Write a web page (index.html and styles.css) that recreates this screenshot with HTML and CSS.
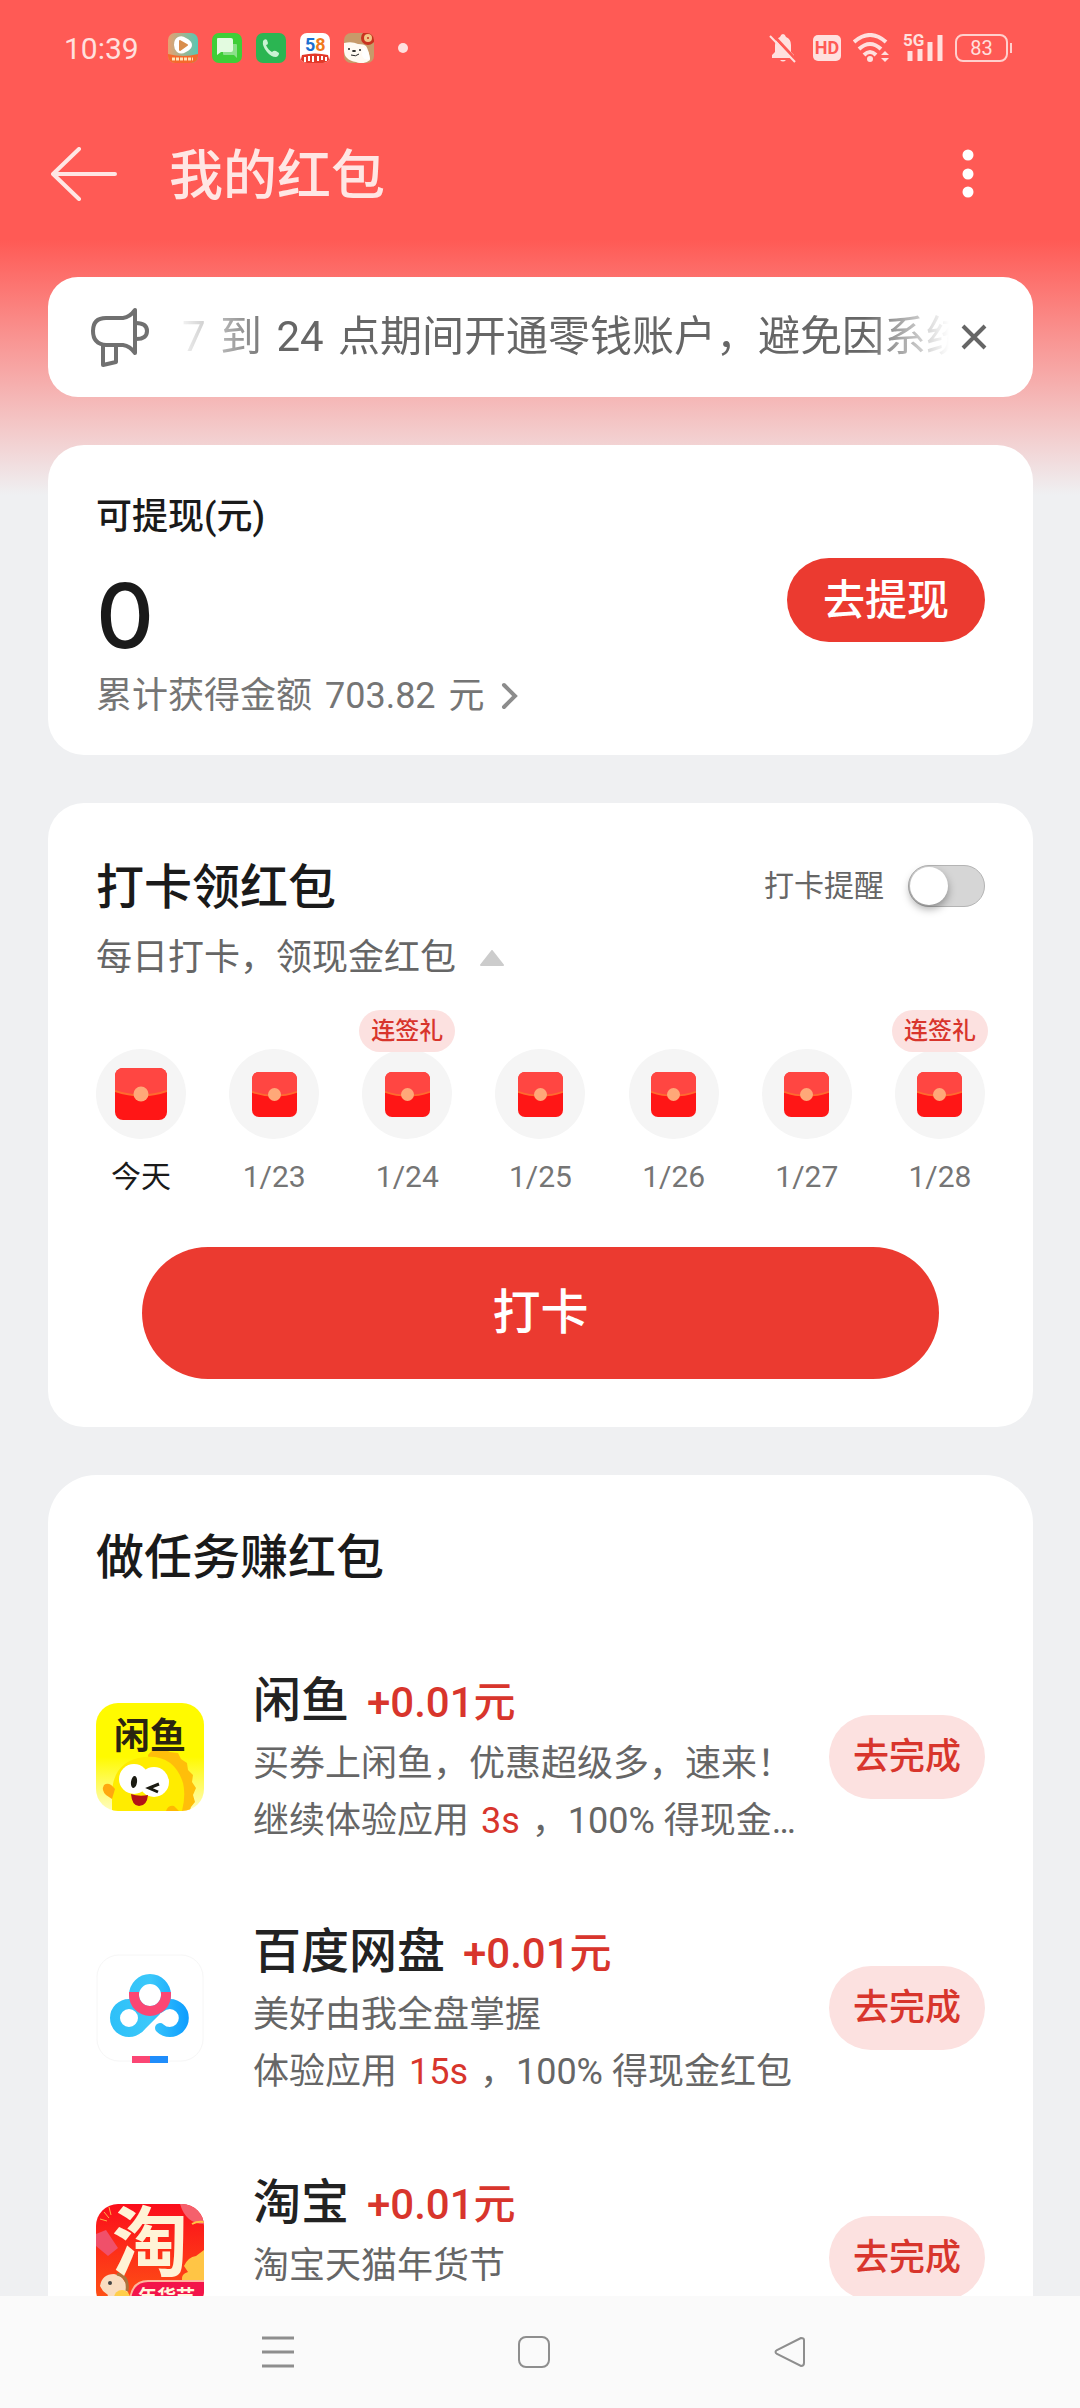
FILE: index.html
```html
<!DOCTYPE html>
<html lang="zh-CN">

<head>
    <meta charset="UTF-8">
    <meta name="viewport" content="width=device-width, initial-scale=1.0">
    <title>我的红包</title>
    <link rel="stylesheet" href="styles.css">
</head>

<body>

    <!-- envelope shared by the seven days -->
    <svg class="defs" width="0" height="0" aria-hidden="true">
        <defs>
            <symbol id="envelope" viewBox="0 0 52 52">
                <rect width="52" height="52" rx="8" fill="#ff1616" />
                <path d="M0 23V8a8 8 0 0 1 8-8h36a8 8 0 0 1 8 8v15Q26 32 0 23z" fill="#ff4642" />
                <path d="M0 23Q26 32 52 23" fill="none" stroke="#ff6a2e" stroke-width="2" />
                <circle cx="26" cy="26" r="7.5" fill="#ffa878" />
            </symbol>
        </defs>
    </svg>

    <div class="status-bar">
        <div class="status-left">
            <span class="time">10:39</span>
            <div class="app-icons">
                <svg width="30" height="30" viewBox="0 0 30 30">
                    <defs>
                        <linearGradient id="video" x1="0" y1="0" x2="1" y2="0">
                            <stop offset="0" stop-color="#e8a070" />
                            <stop offset="1" stop-color="#56c8b4" />
                        </linearGradient>
                        <clipPath id="round"><rect width="30" height="30" rx="7" /></clipPath>
                    </defs>
                    <g clip-path="url(#round)">
                        <rect width="30" height="30" fill="url(#video)" />
                        <path d="M0 21q15 4 30 0v9H0z" fill="#f4692c" />
                        <path d="M10 4q4-2 8 1 6 3 6 7t-6 7q-5 3-9 0-3-3-3-7 0-6 4-8z" fill="#fff" />
                        <path d="M12 8l7 4-7 5z" fill="#d98d4d" stroke="#d98d4d" stroke-width="2" stroke-linejoin="round" />
                        <path d="M4 26h21" stroke="#ffe3b8" stroke-width="3" stroke-dasharray="3 1" />
                    </g>
                </svg>
                <svg width="30" height="30" viewBox="0 0 30 30">
                    <rect width="30" height="30" rx="7" fill="#3fce38" />
                    <path d="M11 11h13q1 0 1 1v13l-3-3H12q-1 0-1-1z" fill="#8be08a" />
                    <path d="M6 5h13q2 0 2 2v10q0 2-2 2H9l-4 3V6q0-1 1-1z" fill="#e3fbe0" />
                </svg>
                <svg width="30" height="30" viewBox="0 0 30 30">
                    <rect width="30" height="30" rx="7" fill="#2bb552" />
                    <path d="M7 8q2-3 4-1l1 3q0 2-2 2 2 5 6 7 2-2 4-1l3 2q0 3-3 4-5 0-9-5-5-6-4-11z" fill="#c8f3d3" />
                </svg>
                <svg width="30" height="30" viewBox="0 0 30 30">
                    <g clip-path="url(#round)">
                        <rect width="30" height="30" fill="#fff" />
                        <text class="logo-58" x="5" y="18"><tspan fill="#1b6fd0">5</tspan><tspan fill="#f07a1c">8</tspan></text>
                        <path d="M2 22q13-3 26 0l2 8H0z" fill="#e23a2a" />
                        <path d="M5 24v5M9 23v5M13 23v6M18 23v5M22 23v4M26 24v4" stroke="#fff" stroke-width="2" />
                    </g>
                </svg>
                <svg width="30" height="30" viewBox="0 0 30 30">
                    <g clip-path="url(#round)">
                        <rect width="30" height="30" fill="#c79a6a" />
                        <path d="M0 10q8-2 14 1 6 0 8 2 3 4 4 14-6 5-14 2Q0 27 0 17z" fill="#fffaf3" />
                        <path d="M19 14q6 3 7 12-6 2-8-4z" fill="#fff" />
                        <circle cx="24" cy="5" r="7" fill="#c9321f" />
                        <circle cx="24" cy="5" r="4" fill="#f2c486" />
                        <circle cx="24" cy="5" r="1" fill="#c9321f" />
                        <circle cx="5" cy="16" r="1" fill="#222" />
                        <ellipse cx="10" cy="18" rx="2" ry="1" fill="#222" />
                        <circle cx="16" cy="17" r="1" fill="#222" />
                        <path d="M7 22q5 2 8-1" fill="none" stroke="#222" stroke-width="1" />
                    </g>
                </svg>
            </div>
            <span class="more-dot"></span>
        </div>
        <div class="status-right">
            <svg class="bell" width="28" height="30" viewBox="0 0 28 30">
                <path d="M3 25v-3l3-3v-7q0-6 5-8 1-3 3-3t3 3q5 2 5 8v7l3 3v3z" fill="#ffe0de" />
                <path d="M11 27h6q-3 3-6 0z" fill="#ffe0de" />
                <path d="M4 2l24 26" stroke="#ff5a55" stroke-width="3" />
                <path d="M1 3l25 26" stroke="#ffe0de" stroke-width="2" />
            </svg>
            <span class="hd">HD</span>
            <svg width="38" height="30" viewBox="0 0 38 30">
                <g fill="none" stroke="#ffe0de" stroke-width="4">
                    <path d="M1 9q16-14 32 0" />
                    <path d="M6 16q11-10 22 0" />
                    <path d="M11 22q6-6 12 0" />
                </g>
                <circle cx="17" cy="26" r="3" fill="#ffe0de" />
                <path d="M28 22l4-4 4 4zM28 25l4 4 4-4z" fill="#ffe0de" />
            </svg>
            <svg width="40" height="30" viewBox="0 0 40 30">
                <text class="net" x="0" y="13">5G</text>
                <path d="M7 18v10M17 16v12M27 9v19M37 2v26" stroke="#ffe0de" stroke-width="5" />
            </svg>
            <span class="battery">83</span>
        </div>
    </div>

    <header class="title-bar">
        <button class="icon-btn" aria-label="返回">
            <svg width="66" height="54" viewBox="0 0 66 54">
                <path d="M28 2L2 27l26 25M2 27h62" fill="none" stroke="#ffe6e4" stroke-width="4" stroke-linecap="round" stroke-linejoin="round" />
            </svg>
        </button>
        <h1>我的红包</h1>
        <button class="icon-btn" aria-label="更多">
            <svg width="12" height="50" viewBox="0 0 12 50" fill="#fff">
                <circle cx="6" cy="6" r="5.5" />
                <circle cx="6" cy="25" r="5.5" />
                <circle cx="6" cy="43" r="5.5" />
            </svg>
        </button>
    </header>

    <main class="content">

        <section class="card notice">
            <svg width="60" height="62" viewBox="0 0 60 62" fill="none" stroke="#707070" stroke-width="4" stroke-linejoin="round">
                <path d="M45 4v43q-5-7-12-8H16Q3 38 3 25t13-13h17q7-1 12-8z" />
                <path d="M46 17q11 0 11 8t-11 8" />
                <path d="M13 39v20l13-3V39" />
            </svg>
            <div class="notice-text"><span class="num">7</span> 到 <span class="num">24</span> 点期间开通零钱账户，避免因系统原因</div>
            <button class="icon-btn" aria-label="关闭">
                <svg width="26" height="26" viewBox="0 0 26 26">
                    <path d="M2 2l22 22M24 2L2 24" stroke="#666" stroke-width="4" />
                </svg>
            </button>
        </section>

        <section class="card balance">
            <div class="balance-info">
                <div class="balance-label">可提现(元)</div>
                <div class="amount">0</div>
                <a class="total" href="#">
                    <span>累计获得金额 <span class="num">703.82</span> 元</span>
                    <svg width="18" height="28" viewBox="0 0 18 28">
                        <path d="M3 3l11 11L3 25" fill="none" stroke="#8c8c8c" stroke-width="4" stroke-linecap="round" />
                    </svg>
                </a>
            </div>
            <button class="btn-withdraw">去提现</button>
        </section>

        <section class="card checkin">
            <div class="checkin-head">
                <h2>打卡领红包</h2>
                <label class="remind">打卡提醒
                    <input type="checkbox" class="switch">
                </label>
            </div>
            <p class="checkin-sub">每日打卡，领现金红包
                <svg width="24" height="16" viewBox="0 0 24 16">
                    <path d="M12 1L23 15H1z" fill="#ccc" stroke="#ccc" stroke-width="2" stroke-linejoin="round" />
                </svg>
            </p>
            <div class="days">
                <div class="day today">
                    <div class="circle"><svg class="envelope"><use href="#envelope" /></svg></div>
                    <span>今天</span>
                </div>
                <div class="day">
                    <div class="circle"><svg class="envelope"><use href="#envelope" /></svg></div>
                    <span>1/23</span>
                </div>
                <div class="day">
                    <em class="gift">连签礼</em>
                    <div class="circle"><svg class="envelope"><use href="#envelope" /></svg></div>
                    <span>1/24</span>
                </div>
                <div class="day">
                    <div class="circle"><svg class="envelope"><use href="#envelope" /></svg></div>
                    <span>1/25</span>
                </div>
                <div class="day">
                    <div class="circle"><svg class="envelope"><use href="#envelope" /></svg></div>
                    <span>1/26</span>
                </div>
                <div class="day">
                    <div class="circle"><svg class="envelope"><use href="#envelope" /></svg></div>
                    <span>1/27</span>
                </div>
                <div class="day">
                    <em class="gift">连签礼</em>
                    <div class="circle"><svg class="envelope"><use href="#envelope" /></svg></div>
                    <span>1/28</span>
                </div>
            </div>
            <button class="btn-checkin">打卡</button>
        </section>

        <section class="card tasks">
            <h2>做任务赚红包</h2>

            <div class="task">
                <svg class="task-icon" viewBox="0 0 108 108">
                    <defs>
                        <linearGradient id="fish" x1="0" y1="0" x2="0" y2="1">
                            <stop offset=".5" stop-color="#fffa00" />
                            <stop offset="1" stop-color="#fffcc0" />
                        </linearGradient>
                        <clipPath id="tile"><rect width="108" height="108" rx="22" /></clipPath>
                    </defs>
                    <g clip-path="url(#tile)">
                        <rect width="108" height="108" fill="url(#fish)" />
                        <path d="M52 52q6-8 16-6l6 3 8 1 3 6 6 4 1 7 5 5-1 7 4 6-3 7 2 7-4 5-2 6H60z" fill="#ffbe0a" />
                        <path d="M16 108V92q0-34 32-38 30-3 39 26 3 12-1 28z" fill="#ffec00" />
                        <path d="M19 86q-6-8-11-4-3 5 2 10l6 4z" fill="#ffa80f" />
                        <path d="M70 108q2-6 8-5l5 5z" fill="#ffb900" />
                        <circle cx="38" cy="76" r="15" fill="#fff" />
                        <circle cx="58" cy="79" r="15" fill="#fff" />
                        <ellipse cx="38" cy="79" rx="3" ry="6" fill="#1b1b12" transform="rotate(8 38 79)" />
                        <path d="M63 81l-10 4 9 4" fill="none" stroke="#1b1b12" stroke-width="3" />
                        <path d="M35 91q8 3 17 1-1 11-9 11-7 0-8-12z" fill="#b31217" />
                        <text class="logo-fish" x="18" y="46">闲鱼</text>
                    </g>
                </svg>
                <div class="task-info">
                    <h3>闲鱼<span class="reward">+0.01元</span></h3>
                    <p>买券上闲鱼，优惠超级多，速来！</p>
                    <p>继续体验应用 <b>3s</b> ，100% 得现金红包</p>
                </div>
                <button class="btn-task">去完成</button>
            </div>

            <div class="task">
                <svg class="task-icon" viewBox="0 0 108 108">
                    <defs>
                        <linearGradient id="pan" gradientUnits="userSpaceOnUse" x1="14" y1="0" x2="94" y2="0">
                            <stop offset="0" stop-color="#2ec0f8" />
                            <stop offset=".5" stop-color="#3bc8fa" />
                            <stop offset="1" stop-color="#0c9bff" />
                        </linearGradient>
                    </defs>
                    <rect x="1" y="1" width="106" height="106" rx="22" fill="#fff" stroke="#f6f6f6" />
                    <g fill="none" stroke="url(#pan)" stroke-width="10" stroke-linecap="round">
                        <circle cx="33" cy="64" r="14" />
                        <path d="M43 74l17-17" />
                        <path d="M64 54a14 14 0 1 1 0 20" />
                        <circle cx="54" cy="41" r="16" />
                    </g>
                    <path d="M38 38v3a16 16 0 0 0 32 0v-3" fill="none" stroke="#fb4674" stroke-width="10" />
                    <path d="M36 102h18v7H36z" fill="#fb4674" />
                    <path d="M54 102h18v7H54z" fill="#1f8dfb" />
                </svg>
                <div class="task-info">
                    <h3>百度网盘<span class="reward">+0.01元</span></h3>
                    <p>美好由我全盘掌握</p>
                    <p>体验应用 <b>15s</b> ，100% 得现金红包</p>
                </div>
                <button class="btn-task">去完成</button>
            </div>

            <div class="task">
                <svg class="task-icon" viewBox="0 0 108 108">
                    <defs>
                        <linearGradient id="tao" x1="0" y1="0" x2="0" y2="1">
                            <stop offset="0" stop-color="#fb0d1b" />
                            <stop offset="1" stop-color="#ff5a14" />
                        </linearGradient>
                    </defs>
                    <g clip-path="url(#tile)">
                        <rect width="108" height="108" fill="url(#tao)" />
                        <path d="M84 0h24v20q-18 0-24-20z" fill="#f5606c" />
                        <path d="M0 30l10-4 12 18-10 8L0 42z" fill="#f0506a" />
                        <path d="M8 8l5 6M13 3l2 8M4 15l7 2" stroke="#ffb347" stroke-width="1" />
                        <path d="M88 62q4-9 12-10l8-6v30H86q-1-6 6-8z" fill="#ffc545" />
                        <path d="M96 20q5-3 12-2" stroke="#ffc545" stroke-width="2" fill="none" />
                        <path d="M4 82q2-12 14-12 12 2 13 16l6 22H4l8-17-5-4z" fill="#f9dcc0" />
                        <path d="M21 70q12 2 10 17" fill="none" stroke="#a9743d" stroke-width="3" />
                        <circle cx="14" cy="79" r="2" fill="#444" />
                        <circle cx="26" cy="94" r="8" fill="#ffce4a" />
                        <text class="logo-tao" x="16" y="66">淘</text>
                        <path d="M34 108V96q2-19 18-19h58v31z" fill="#f3144a" stroke="#ffb59c" stroke-width="2" />
                        <text class="logo-fest" x="42" y="100">年货节</text>
                    </g>
                </svg>
                <div class="task-info">
                    <h3>淘宝<span class="reward">+0.01元</span></h3>
                    <p>淘宝天猫年货节</p>
                </div>
                <button class="btn-task">去完成</button>
            </div>
        </section>

    </main>

    <nav class="nav-bar">
        <button class="icon-btn" aria-label="最近任务">
            <svg width="32" height="32" viewBox="0 0 32 32">
                <path d="M0 2h32M0 16h32M0 30h32" stroke="#8e8e8e" stroke-width="3" />
            </svg>
        </button>
        <button class="icon-btn" aria-label="主屏幕">
            <svg width="32" height="32" viewBox="0 0 32 32">
                <rect x="1" y="1" width="30" height="30" rx="7" fill="none" stroke="#8e8e8e" stroke-width="2" />
            </svg>
        </button>
        <button class="icon-btn" aria-label="返回">
            <svg width="32" height="32" viewBox="0 0 32 32">
                <path d="M27 2L3 14q-3 2 0 4l24 12q3 0 3-3V4q0-2-3-2z" fill="none" stroke="#8e8e8e" stroke-width="2" />
            </svg>
        </button>
    </nav>

</body>

</html>
```
FILE: styles.css
```css
* {
    margin: 0;
    padding: 0;
    box-sizing: border-box;
    font-family: Roboto, "Noto Sans CJK SC", sans-serif;
}

body {
    height: 100vh;
    display: flex;
    flex-direction: column;
    background: #eff0f2 linear-gradient(#ff5a55 240px, #eff0f2 495px);
    color: #1a1a1a;
    overflow: hidden;
}

svg {
    display: block;
    flex-shrink: 0;
}

.defs {
    position: absolute;
}

button {
    border: none;
    cursor: pointer;
    line-height: 1;
}

.icon-btn {
    background: none;
    display: flex;
}

h1,
h2,
h3 {
    font-weight: 500;
}

.num {
    margin: 0 4px;
}

/* status bar */
.status-bar {
    height: 96px;
    flex-shrink: 0;
    padding: 0 68px 0 64px;
    display: flex;
    align-items: center;
    justify-content: space-between;
    color: #ffe0de;
}

.status-left,
.status-right,
.app-icons {
    display: flex;
    align-items: center;
}

.time {
    font-size: 30px;
    width: 104px;
}

.app-icons {
    gap: 14px;
}

.more-dot {
    width: 10px;
    height: 10px;
    margin-left: 24px;
    border-radius: 50%;
    background: #ffe0de;
}

.status-right {
    gap: 12px;
}

.bell {
    margin-right: 4px;
}

.hd {
    width: 28px;
    height: 26px;
    border-radius: 5px;
    background: #ffe0de;
    color: #ff5a55;
    font-size: 18px;
    font-weight: 700;
    line-height: 26px;
    text-align: center;
}

.net {
    font-size: 17px;
    font-weight: 700;
    fill: #ffe0de;
}

.battery {
    position: relative;
    width: 53px;
    height: 28px;
    margin-right: 4px;
    border: 2px solid #ffd0cd;
    border-radius: 8px;
    font-size: 20px;
    line-height: 24px;
    text-align: center;
}

.battery::after {
    content: "";
    position: absolute;
    right: -6px;
    top: 7px;
    width: 2px;
    height: 10px;
    background: #ffd0cd;
}

/* title */
.title-bar {
    height: 156px;
    flex-shrink: 0;
    padding: 0 106px 0 51px;
    display: flex;
    align-items: center;
    color: #ffe6e4;
}

.title-bar h1 {
    flex: 1;
    margin-left: 52px;
    padding-top: 6px;
    font-size: 54px;
    line-height: 72px;
}

/* cards */
.content {
    flex: 1;
    min-height: 0;
    padding: 25px 47px 0 48px;
    overflow: hidden;
}

.card {
    margin-bottom: 48px;
    padding: 0 48px;
    border-radius: 36px;
    background: #fff;
}

.card h2 {
    padding-top: 4px;
    font-size: 48px;
    line-height: 66px;
}

.notice {
    height: 120px;
    padding: 0 46px 0 42px;
    border-radius: 30px;
    display: flex;
    align-items: center;
}

.notice-text {
    flex: 1;
    min-width: 0;
    margin: 0 12px 0 24px;
    padding-left: 4px;
    overflow: hidden;
    white-space: nowrap;
    font-size: 42px;
    line-height: 60px;
    color: #666;
    -webkit-mask-image: linear-gradient(90deg, transparent, #000 100px, #000 calc(100% - 84px), transparent);
    mask-image: linear-gradient(90deg, transparent, #000 100px, #000 calc(100% - 84px), transparent);
}

.balance {
    display: flex;
    align-items: center;
    justify-content: space-between;
}

.balance-info {
    padding: 44px 0 38px;
}

.balance-label {
    font-size: 36px;
    font-weight: 500;
    line-height: 56px;
}

.amount {
    margin-top: 12px;
    font-family: Inter, sans-serif;
    font-size: 90px;
    font-weight: 500;
    line-height: 118px;
}

.total {
    display: flex;
    align-items: center;
    gap: 16px;
    font-size: 36px;
    line-height: 42px;
    color: #757575;
    text-decoration: none;
}

.btn-withdraw {
    height: 84px;
    padding: 2px 36px 0;
    border-radius: 42px;
    background: #eb3a30;
    color: #fff;
    font-size: 42px;
    font-weight: 500;
}

/* check in */
.checkin {
    padding-top: 48px;
    padding-bottom: 48px;
}

.checkin-head {
    display: flex;
    align-items: center;
    justify-content: space-between;
}

.remind {
    display: flex;
    align-items: center;
    gap: 24px;
    font-size: 30px;
    line-height: 42px;
    color: #666;
}

.switch {
    appearance: none;
    width: 77px;
    height: 42px;
    padding: 1px;
    border: 1px solid #b4b4b4;
    border-radius: 21px;
    background: #d6d6d6;
}

.switch::before {
    content: "";
    display: block;
    width: 38px;
    height: 38px;
    border-radius: 50%;
    background: #fff;
    box-shadow: 0 4px 8px rgba(0, 0, 0, .35);
}

.switch:checked {
    background: #eb3a30;
}

.switch:checked::before {
    margin-left: 35px;
}

.checkin-sub {
    display: flex;
    align-items: center;
    gap: 24px;
    padding-top: 2px;
    font-size: 36px;
    line-height: 70px;
    color: #666;
}

.days {
    margin-top: 56px;
    display: flex;
    justify-content: space-between;
}

.day {
    position: relative;
    width: 90px;
    text-align: center;
    font-size: 30px;
    line-height: 40px;
    color: #757575;
}

.circle {
    height: 90px;
    margin-bottom: 18px;
    border-radius: 50%;
    background: #f5f5f5;
    display: flex;
    align-items: center;
    justify-content: center;
}

.envelope {
    width: 45px;
    height: 45px;
}

.today {
    color: #1a1a1a;
}

.today .envelope {
    width: 52px;
    height: 52px;
}

/* badge sits on top of the circle */
.gift {
    position: absolute;
    top: -39px;
    left: -3px;
    width: 96px;
    border-radius: 21px;
    background: #fce1e0;
    color: #d8352c;
    font-size: 24px;
    font-style: normal;
    font-weight: 500;
    line-height: 42px;
}

.btn-checkin {
    display: block;
    width: calc(100% - 92px);
    height: 132px;
    margin: 50px auto 0;
    border-radius: 66px;
    background: #eb3a30;
    color: #fff;
    font-size: 48px;
    font-weight: 500;
}

/* tasks */
.tasks {
    padding-top: 46px;
    border-radius: 48px;
}

.tasks h2 {
    margin-bottom: 40px;
}

.task {
    padding: 33px 0 32px;
    display: flex;
    align-items: center;
}

.task-icon {
    width: 108px;
    height: 108px;
    margin-right: 49px;
    overflow: visible;
}

.task-info {
    flex: 1;
    min-width: 0;
    min-height: 184px;
    margin-right: 30px;
}

.task-info h3 {
    padding-top: 4px;
    font-size: 48px;
    line-height: 66px;
    color: #222;
}

.task-info p {
    overflow: hidden;
    white-space: nowrap;
    text-overflow: ellipsis;
    font-size: 36px;
    line-height: 57px;
    color: #666;
}

.task-info b {
    margin: 0 3px;
    font-weight: 400;
    color: #d8352c;
}

.reward {
    margin-left: 18px;
    font-size: 42px;
    color: #d8352c;
}

.btn-task {
    height: 84px;
    padding: 0 24px;
    border-radius: 42px;
    background: #fce1e0;
    color: #d8352c;
    font-size: 36px;
    font-weight: 500;
}

/* lettering inside the app icons */
.logo-58 {
    font-size: 18px;
    font-weight: 700;
}

.logo-fish {
    font-size: 36px;
    font-weight: 700;
    fill: #2a2410;
}

.logo-tao {
    font-size: 76px;
    font-weight: 700;
    fill: #fff3d6;
}

.logo-fest {
    font-size: 19px;
    font-weight: 700;
    fill: #fff6dc;
}

/* system navigation */
.nav-bar {
    height: 112px;
    flex-shrink: 0;
    padding: 0 274px 0 262px;
    display: flex;
    align-items: center;
    justify-content: space-between;
    background: #fafafa;
}
```
